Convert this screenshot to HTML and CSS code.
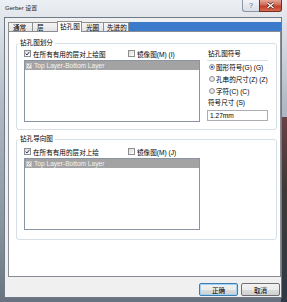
FILE: index.html
```html
<!DOCTYPE html>
<html lang="zh-CN">
<head>
	<meta charset="UTF-8"/>
	<title>Gerber 设置</title>
	<link rel="stylesheet" href="styles.css">
</head>
<body>
<div class="window">
	<div class="titlebar">
		<span class="title">Gerber 设置</span>
		<div class="caption-btns">
			<span class="cap-help">?</span>
			<span class="cap-close">
				<svg width="9" height="7" viewBox="0 0 9 7"><path d="M1.5 1 L7.5 6 M7.5 1 L1.5 6" stroke="#4a1a12" stroke-width="2.6"/><path d="M1.5 1 L7.5 6 M7.5 1 L1.5 6" stroke="#fff" stroke-width="1.4"/></svg>
			</span>
		</div>
	</div>
	<div class="client">
		<div class="tabs">
			<div class="tab" style="width:24px">通常</div>
			<div class="tab" style="width:25px">层</div>
			<div class="tab selected" style="width:25px">钻孔图</div>
			<div class="tab" style="width:21px">光圈</div>
			<div class="tab last" style="width:25px">先进的</div>
			<div class="tab-fill"></div>
		</div>
		<div class="panel">
			<!-- 钻孔图划分 -->
			<fieldset class="group group-split">
				<legend>钻孔图划分</legend>
				<div class="group-body">
					<div class="left-col">
						<div class="check-row">
							<label class="check first"><span class="box"><svg width="5" height="5" viewBox="0 0 5 5"><path d="M0.6 2.6 L2 4 L4.4 0.8" fill="none" stroke="#2c3f73" stroke-width="1"/></svg></span>在所有有用的层对上绘图</label>
							<label class="check"><span class="box"></span>镜像图(M) (I)</label>
						</div>
						<div class="listbox split-list">
							<div class="list-item selected"><span class="box dim"><svg width="5" height="5" viewBox="0 0 5 5"><path d="M0.6 2.6 L2 4 L4.4 0.8" fill="none" stroke="#8a8a8a" stroke-width="1"/></svg></span>Top Layer-Bottom Layer</div>
						</div>
					</div>
					<div class="right-col">
						<div class="sym-title">钻孔图符号</div>
						<label class="radio"><span class="dot checked"></span>图形符号(G) (G)</label>
						<label class="radio"><span class="dot"></span>孔串的尺寸(Z) (Z)</label>
						<label class="radio"><span class="dot"></span>字符(C) (C)</label>
						<div class="size-label">符号尺寸 (S)</div>
						<div class="textbox">1.27mm</div>
					</div>
				</div>
			</fieldset>
			<!-- 钻孔导向图 -->
			<fieldset class="group group-guide">
				<legend>钻孔导向图</legend>
				<div class="group-body">
					<div class="left-col">
						<div class="check-row">
							<label class="check first"><span class="box"><svg width="5" height="5" viewBox="0 0 5 5"><path d="M0.6 2.6 L2 4 L4.4 0.8" fill="none" stroke="#2c3f73" stroke-width="1"/></svg></span>在所有有用的层对上绘</label>
							<label class="check"><span class="box"></span>镜像图(M) (J)</label>
						</div>
						<div class="listbox guide-list">
							<div class="list-item selected"><span class="box dim"><svg width="5" height="5" viewBox="0 0 5 5"><path d="M0.6 2.6 L2 4 L4.4 0.8" fill="none" stroke="#8a8a8a" stroke-width="1"/></svg></span>Top Layer-Bottom Layer</div>
						</div>
					</div>
				</div>
			</fieldset>
		</div>
		<div class="buttons">
			<button class="btn default">正确</button>
			<button class="btn">取消</button>
		</div>
	</div>
</div>
</body>
</html>
```

FILE: styles.css
```css
* {
	box-sizing: border-box;
}

body {
	margin: 0;
	font-family: "Liberation Sans", "Noto Sans CJK SC", sans-serif;
	font-size: 6.6px;
	color: #000;
}

.window {
	width: 287px;
	height: 302px;
	display: flex;
	flex-direction: column;
	padding: 0 6px 5px 5px;
	background:
		linear-gradient(#6b4045, #3d3a36 40%, #2f3a46) right bottom / 6px 185px no-repeat,
		linear-gradient(#eceff3 0, #e1e6eb 18px, #b3bcc6 100px, #8a95a2 220px, #69737f 100%);
}

.titlebar {
	height: 17px;
	display: flex;
	align-items: flex-start;
	margin-bottom: 1px;
}

.title {
	margin-top: 4px;
	font-size: 6px;
	line-height: 8px;
	color: #1e1e1e;
}

.caption-btns {
	margin-left: auto;
	margin-right: -1px;
	display: flex;
}

.cap-help {
	width: 17px;
	height: 12px;
	border: 1px solid #8c97a6;
	border-top: none;
	border-right: none;
	border-radius: 0 0 0 3px;
	background: linear-gradient(#f2f4f7, #d9dee5);
	font-size: 7px;
	line-height: 11px;
	text-align: center;
	color: #5b6470;
}

.cap-close {
	width: 23px;
	height: 12px;
	border: 1px solid #7a2c22;
	border-top: none;
	border-radius: 0 0 3px 0;
	background: linear-gradient(#e6a698, #cf6a57 45%, #c0402b 55%, #d86a4e);
	display: flex;
	align-items: center;
	justify-content: center;
}

.client {
	flex: 1;
	background: #f0f0f0;
	padding: 3px 0 0 3px;
	box-shadow: 0 0 0 1px #6f7a88;
	display: flex;
	flex-direction: column;
}

.tabs {
	height: 10px;
	display: flex;
	align-items: flex-end;
	position: relative;
	z-index: 1;
}

.tab {
	height: 9px;
	padding-left: 4px;
	line-height: 9px;
	border: 1px solid #8e8f8f;
	border-bottom: none;
	border-right: none;
	background: linear-gradient(#f5f5f5, #e3e3e3);
	white-space: nowrap;
}

.tab.last {
	padding-left: 3px;
	background: linear-gradient(#f4f6f9, #e4e8ee);
}

.tab.selected {
	height: 11px;
	margin-bottom: -1px;
	padding-left: 2px;
	line-height: 10px;
	background: #fff;
	border-right: 1px solid #8e8f8f;
}

.tab.selected + .tab {
	border-left: none;
}

.tab-fill {
	flex: 1;
	height: 9px;
	background: #3c7bcc;
	border-left: 1px solid #8e8f8f;
}

.panel {
	height: 246px;
	background: #fff;
	border: 1px solid #898c95;
	padding: 7px 3px 0 7px;
}

.group {
	margin: 0;
	padding: 0;
	min-width: 0;
	border: 1px solid #d5dfe5;
	border-radius: 3px;
}

.group legend {
	margin-left: 1px;
	padding: 0 2px;
	line-height: 8px;
}

.group-body {
	display: flex;
	padding: 2px 7px 7px;
}

.group-guide {
	margin-top: 5px;
}

.group-guide .group-body {
	padding-top: 4px;
	padding-bottom: 9px;
}

.left-col {
	width: 176px;
}

.check-row {
	height: 9px;
	display: flex;
	align-items: center;
}

.check {
	display: flex;
	align-items: center;
	white-space: nowrap;
}

.check.first {
	width: 104px;
}

.box {
	width: 7px;
	height: 7px;
	margin-right: 2px;
	border: 1px solid #8e8f8f;
	background: linear-gradient(135deg, #dcdcdc, #fff);
	display: flex;
	align-items: center;
	justify-content: center;
}

.box.dim {
	width: 6px;
	height: 6px;
	border-color: #c4c4c4;
	background: #e8e8e8;
}

.listbox {
	margin-top: 2px;
	border: 1px solid #8a94a3;
	background: #fff;
}

.split-list {
	height: 62px;
}

.guide-list {
	height: 72px;
}

.list-item {
	height: 9px;
	padding-left: 1px;
	display: flex;
	align-items: center;
	white-space: nowrap;
}

.list-item.selected {
	background: #a3a3a3;
	color: #f4f4f4;
}

.right-col {
	width: 61px;
	margin-left: 7px;
	white-space: nowrap;
	overflow: hidden;
}

.sym-title {
	line-height: 9px;
	padding: 0 0 2px 1px;
	border-bottom: 1px solid #d5dfe5;
}

.radio {
	height: 12px;
	padding-left: 2px;
	display: flex;
	align-items: center;
}

.dot {
	width: 6px;
	height: 6px;
	margin-right: 1px;
	border-radius: 50%;
	border: 1px solid #939393;
	background: radial-gradient(circle, #f6f6f6 0, #d4d4d4 100%);
	flex: none;
}

.dot.checked {
	background: radial-gradient(circle, #1f63c7 0, #3a82d8 35%, #e8eef6 45%, #cdd3da 100%);
}

.size-label {
	line-height: 12px;
	padding-left: 1px;
}

.textbox {
	width: 61px;
	height: 11px;
	margin-top: 1px;
	border: 1px solid #abadb3;
	padding-left: 2px;
	line-height: 9px;
}

.buttons {
	margin-top: 6px;
	padding-right: 1px;
	display: flex;
	justify-content: flex-end;
	gap: 3px;
}

.btn {
	width: 39px;
	height: 13px;
	padding: 0;
	font-family: inherit;
	font-size: 6.6px;
	color: #000;
	border: 1px solid #707070;
	border-radius: 2px;
	background: linear-gradient(#f2f2f2 0, #ebebeb 50%, #dddddd 51%, #cfcfcf 100%);
}

.btn.default {
	border-color: #3c7fb1;
	box-shadow: inset 0 0 0 1px #9fd3f5;
}
```
